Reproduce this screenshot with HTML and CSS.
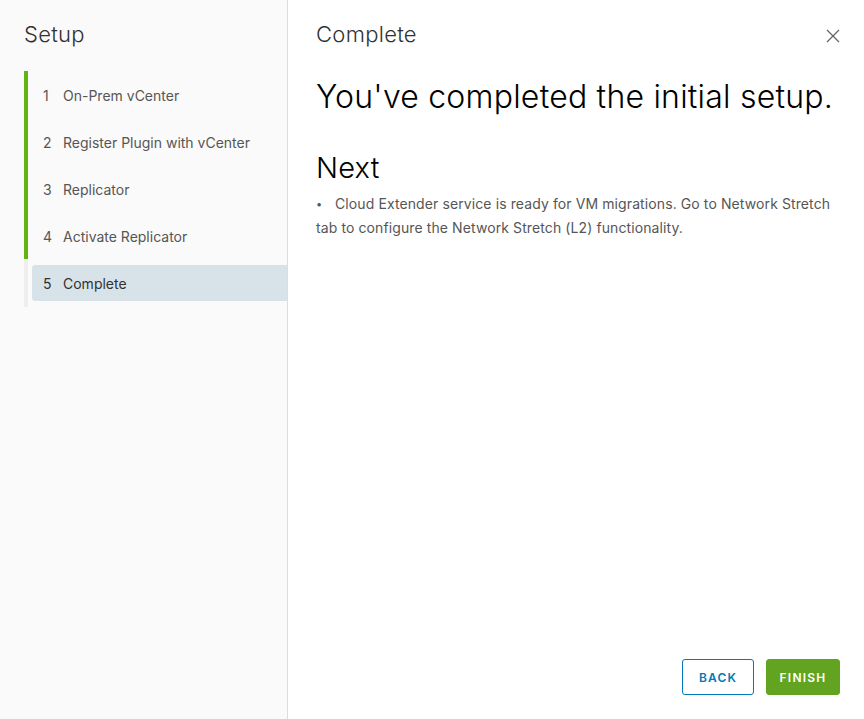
FILE: index.html
```html
<!DOCTYPE html>
<html>
<head>
<meta charset="utf-8">
<link rel="stylesheet" href="styles.css">
</head>
<body>
<div class="modal">
  <aside class="side">
    <div class="side-title">Setup</div>
    <ol class="steps">
      <li class="step done"><span class="num">1</span>On-Prem vCenter</li>
      <li class="step done"><span class="num">2</span>Register Plugin with vCenter</li>
      <li class="step done"><span class="num">3</span>Replicator</li>
      <li class="step done"><span class="num">4</span>Activate Replicator</li>
      <li class="step current"><span class="label"><span class="num">5</span>Complete</span></li>
    </ol>
  </aside>
  <main class="content">
    <header class="head">
      <div class="page-title">Complete</div>
      <button class="close" aria-label="Close">
        <svg width="14" height="14" viewBox="0 0 14 14"><path d="M1 1L13 13M13 1L1 13" stroke="#666" stroke-width="1.3" fill="none"/></svg>
      </button>
    </header>
    <h1 class="h1">You've completed the initial setup.</h1>
    <h2 class="h2">Next</h2>
    <ul class="bullets">
      <li>Cloud Extender service is ready for VM migrations. Go to Network Stretch tab to configure the Network Stretch (L2) functionality.</li>
    </ul>
    <div class="spacer"></div>
    <footer class="foot">
      <button class="btn btn-outline">BACK</button>
      <button class="btn btn-primary">FINISH</button>
    </footer>
  </main>
</div>
</body>
</html>
```
FILE: styles.css
```css
html, body { margin: 0; padding: 0; height: 100%; }
body { font-family: "Inter", "Open Sans", sans-serif; color: #565656; background: #fff; }
.modal { display: flex; height: 719px; }
.side { width: 287px; background: #fafafa; border-right: 1px solid #ddd; flex: none; box-sizing: content-box; }
.side-title { font-size: 22px; font-weight: 300; color: #313131; padding: 21px 0 0 24px; line-height: 26px; letter-spacing: 0.3px; }
.steps { list-style: none; margin: 24px 0 0 24px; padding: 0; }
.step { height: 47px; border-left: 4px solid #eee; display: flex; align-items: center; font-size: 14px; color: #565656; padding-left: 15px; padding-top: 1px; box-sizing: border-box; }
.step.done { border-left-color: #60b515; }
.step .num { display: inline-block; width: 20px; }
.step.current { padding-left: 4px; height: 48px; padding-top: 0; }
.step.current .label { flex: 1; height: 36px; background: #d8e3e9; border-radius: 3px 0 0 3px; display: flex; align-items: center; padding-left: 11px; padding-top: 1px; box-sizing: border-box; color: #313131; }
.content { flex: 1; display: flex; flex-direction: column; padding: 0 24px 24px 28px; }
.head { display: flex; justify-content: space-between; align-items: center; padding-top: 21px; height: 26px; }
.page-title { font-size: 22px; font-weight: 300; color: #313131; line-height: 26px; letter-spacing: 0.3px; }
.close { border: 0; background: none; padding: 0; margin-top: 4px; width: 14px; height: 14px; display: flex; }
.h1 { font-size: 32px; font-weight: 300; color: #000; margin: 30px 0 0 0; line-height: 40px; letter-spacing: 0.22px; }
.h2 { font-size: 29px; font-weight: 300; color: #000; margin: 34px 0 0 0; line-height: 34px; letter-spacing: 0.2px; }
.bullets { margin: 7px 0 0 0; padding: 0; list-style: none; font-size: 14px; line-height: 24px; color: #565656; letter-spacing: 0.1px; }
.bullets li::before { content: "•"; display: inline-block; width: 19px; font-size: 11px; vertical-align: 1px; }
.spacer { flex: 1; }
.foot { display: flex; justify-content: flex-end; gap: 12px; }
.btn { height: 36px; border-radius: 3px; font-family: inherit; font-size: 12px; font-weight: 600; letter-spacing: 1.2px; padding: 0 11px; cursor: pointer; }
.btn-outline { background: #fff; color: #0079b8; border: 1px solid #0079b8; width: 72px; }
.btn-primary { background: #62a420; color: #fff; border: 1px solid #62a420; width: 74px; }
```
